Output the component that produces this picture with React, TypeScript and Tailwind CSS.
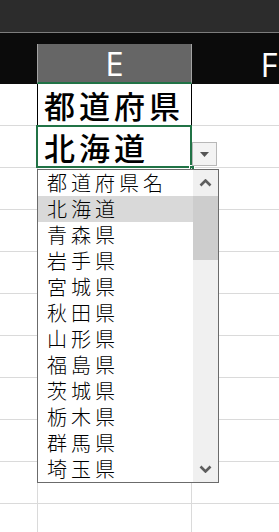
import React from "react";

const items = [
  "都道府県名",
  "北海道",
  "青森県",
  "岩手県",
  "宮城県",
  "秋田県",
  "山形県",
  "福島県",
  "茨城県",
  "栃木県",
  "群馬県",
  "埼玉県",
];

const jp = { fontFamily: '"Noto Sans CJK JP", "Noto Sans", sans-serif' };

function Row({ index }: { index: number }) {
  const first = index === 0;
  const second = index === 1;
  return (
    <div className="flex h-[42px] shrink-0">
      <div
        className={
          "w-[38px] shrink-0 border-b border-r border-b-[#dadada] " +
          (first ? "border-r-black" : "border-r-[#dadada]")
        }
      />
      <div
        className={
          "relative flex w-[154px] shrink-0 items-center border-b border-r pl-[6px] border-b-[#dadada] " +
          (first ? "border-r-black" : "border-r-[#dadada]")
        }
      >
        {first && (
          <span className="text-[31px] font-medium leading-none tracking-[4px] text-black" style={jp}>
            都道府県
          </span>
        )}
        {second && (
          <>
            <span className="text-[31px] font-medium leading-none tracking-[4px] text-black" style={jp}>
              北海道
            </span>
            <div className="absolute left-[-2px] right-[-1px] top-[-1px] bottom-[-1px] border-2 border-[#217346]" />
            <div className="absolute right-[-4px] bottom-[-4px] h-[6px] w-[6px] border border-white bg-[#217346]" />
          </>
        )}
      </div>
      <div className="flex-1 border-b border-[#dadada]" />
    </div>
  );
}

export default function App() {
  return (
    <div className="relative h-[532px] w-[279px] overflow-hidden bg-white">
      <div className="h-[33px] border-b border-[#7d7d7d] bg-[#2c2c2c]" />
      <div className="flex h-[51px] items-end bg-[#0b0b0b]">
        <div className="w-[37px] shrink-0" />
        <div
          className="flex h-[40px] w-[155px] shrink-0 items-center justify-center border-x border-b-2 border-x-[#a3a3a3] border-b-[#217346] bg-[#666666] text-[33px] font-normal leading-none text-white"
          style={{ fontFamily: '"Open Sans", sans-serif' }}
        >
          E
        </div>
        <div
          className="flex h-[40px] w-[154px] shrink-0 items-center justify-center text-[33px] font-normal leading-none text-white"
          style={{ fontFamily: '"Open Sans", sans-serif' }}
        >
          F
        </div>
      </div>
      <div className="flex flex-col">
        {Array.from({ length: 11 }).map((_, i) => (
          <Row key={i} index={i} />
        ))}
      </div>

      {/* dropdown button */}
      <div className="absolute left-[192px] top-[142px] flex h-[24px] w-[25px] items-center justify-center border border-[#b8b8b8] bg-[#f3f3f3]">
        <svg width="9" height="5" viewBox="0 0 9 5">
          <polygon points="0,0 9,0 4.5,5" fill="#555555" />
        </svg>
      </div>

      {/* dropdown list */}
      <div className="absolute left-[37px] top-[169px] flex h-[314px] w-[182px] border border-[#6b6b6b] bg-white">
        <div className="flex flex-1 flex-col">
          {items.map((t, i) => (
            <div
              key={t}
              className={
                "flex h-[26px] items-center pl-[9px] text-[20px] font-light leading-[22px] tracking-[4px] text-black " +
                (i === 1 ? "bg-[#d9d9d9]" : "")
              }
              style={jp}
            >
              {t}
            </div>
          ))}
        </div>
        <div className="flex w-[25px] flex-col bg-[#f0f0f0]">
          <div className="flex h-[26px] items-center justify-center">
            <svg width="13" height="8" viewBox="0 0 13 8">
              <polyline points="1.5,6.5 6.5,1.5 11.5,6.5" fill="none" stroke="#5e5e5e" strokeWidth="2.6" />
            </svg>
          </div>
          <div className="h-[64px] bg-[#cdcdcd]" />
          <div className="flex-1" />
          <div className="flex h-[26px] items-center justify-center">
            <svg width="13" height="8" viewBox="0 0 13 8">
              <polyline points="1.5,1.5 6.5,6.5 11.5,1.5" fill="none" stroke="#5e5e5e" strokeWidth="2.6" />
            </svg>
          </div>
        </div>
      </div>
    </div>
  );
}
